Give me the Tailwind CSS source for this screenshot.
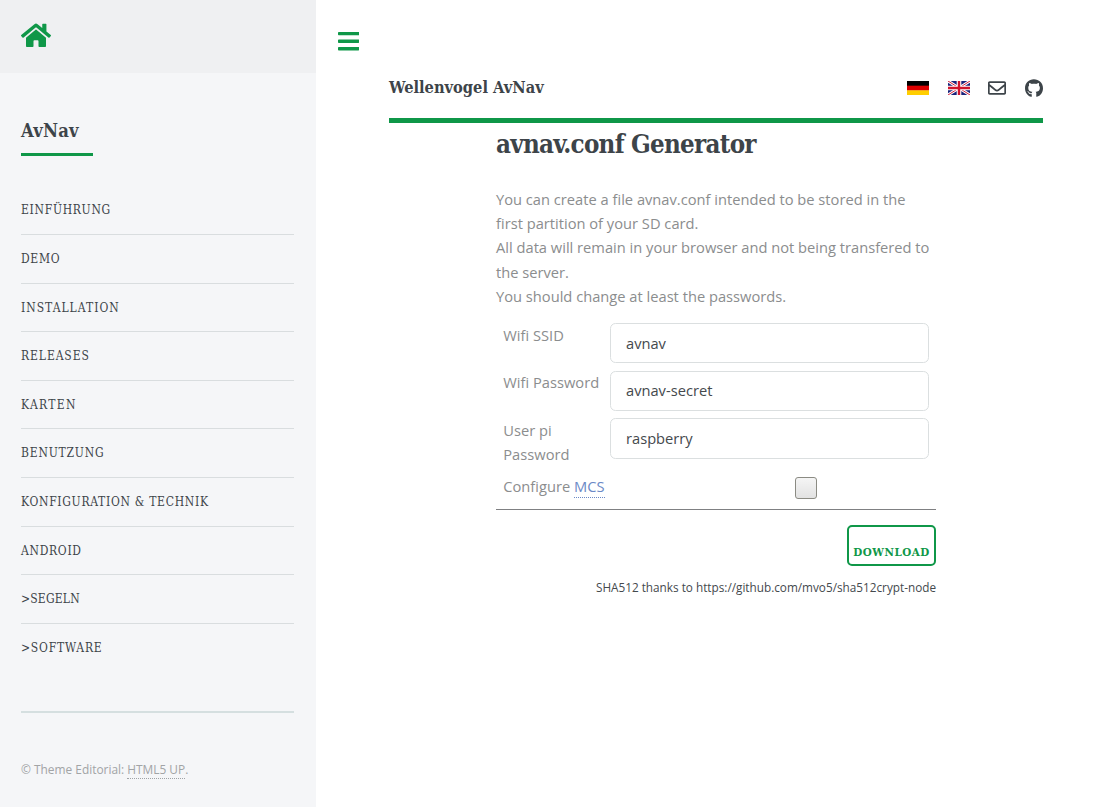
<!DOCTYPE html>
<html lang="de">
<head>
<meta charset="utf-8">
<title>avnav.conf Generator</title>
<script src="https://cdn.jsdelivr.net/npm/@tailwindcss/browser@4"></script>
</head>
<body class="flex h-[807px] overflow-hidden bg-white font-['Open_Sans','Noto_Sans',sans-serif] text-[14.68px] leading-[24.2px] text-[#7f888f]">
<aside class="flex h-full w-[316px] shrink-0 flex-col bg-[#f5f6f8]">
  <div class="h-[73px] shrink-0 bg-[#eff0f2] pl-[21px] pt-[22px]">
    <svg class="h-[26.7px] w-[30px] fill-[#0f9748]" viewBox="0 0 576 512"><path d="M280.37 148.26L96 300.11V464a16 16 0 0 0 16 16l112.06-.29a16 16 0 0 0 15.92-16V368a16 16 0 0 1 16-16h64a16 16 0 0 1 16 16v95.64a16 16 0 0 0 16 16.05L464 480a16 16 0 0 0 16-16V300L295.67 148.26a12.19 12.19 0 0 0-15.3 0zM571.6 251.47L488 182.56V44.05a12 12 0 0 0-12-12h-56a12 12 0 0 0-12 12v72.61L318.47 43a48 48 0 0 0-61 0L4.34 251.47a12 12 0 0 0-1.6 16.9l25.5 31A12 12 0 0 0 45.15 301l235.22-193.74a12.19 12.19 0 0 1 15.3 0L530.9 301a12 12 0 0 0 16.9-1.6l25.5-31a12 12 0 0 0-1.7-16.93z"/></svg>
  </div>
  <div class="ml-[21px] w-[273px]">
    <h2 class="mt-[44px] h-[39px] w-[72px] border-b-3 border-[#0f9748] font-['Roboto_Slab','DejaVu_Serif_Condensed','DejaVu_Serif',serif] text-[18.3px] leading-[27px] font-bold font-stretch-condensed tracking-[0.2px] whitespace-nowrap text-[#3d4449]">AvNav</h2>
    <nav class="mt-[30.4px] flex flex-col divide-y divide-[#d9dddf] font-['Roboto_Slab','DejaVu_Serif_Condensed','DejaVu_Serif',serif] text-[12px] leading-[49.2px] font-stretch-condensed tracking-[0.7px] whitespace-nowrap text-[#3d4449]">
      <a class="h-[48.6px]">EINFÜHRUNG</a>
      <a class="h-[48.6px]">DEMO</a>
      <a class="h-[48.6px] tracking-[1px]">INSTALLATION</a>
      <a class="h-[48.6px] tracking-[0.9px]">RELEASES</a>
      <a class="h-[48.6px] tracking-[1.3px]">KARTEN</a>
      <a class="h-[48.6px] tracking-[0.8px]">BENUTZUNG</a>
      <a class="h-[48.6px]">KONFIGURATION &amp; TECHNIK</a>
      <a class="h-[48.6px]">ANDROID</a>
      <a class="h-[48.6px] tracking-[0.2px]">&gt;SEGELN</a>
      <a class="h-[48.6px] tracking-[0.8px]">&gt;SOFTWARE</a>
    </nav>
    <footer class="mt-[38.6px] border-t-2 border-[#d5dfe0] pt-[44.4px] text-[11.9px] text-[#a2a4a6]">© Theme Editorial: <a class="border-b border-dotted border-[#9fa3a6] pb-px">HTML5 UP</a>.</footer>
  </div>
</aside>
<main class="w-[727px] pl-[22px] pt-[28.6px]">
  <svg class="h-[24.4px] w-[21.3px] fill-[#0f9748]" viewBox="0 0 448 512"><path d="M16 132h416c8.837 0 16-7.163 16-16V76c0-8.837-7.163-16-16-16H16C7.163 60 0 67.163 0 76v40c0 8.837 7.163 16 16 16zm0 160h416c8.837 0 16-7.163 16-16v-40c0-8.837-7.163-16-16-16H16c-8.837 0-16 7.163-16 16v40c0 8.837 7.163 16 16 16zm0 160h416c8.837 0 16-7.163 16-16v-40c0-8.837-7.163-16-16-16H16c-8.837 0-16 7.163-16 16v40c0 8.837 7.163 16 16 16z"/></svg>
  <div class="ml-[51px]">
    <header class="mt-[22px] flex h-[48px] items-start justify-between border-b-5 border-[#0f9748]">
      <strong class="font-['Roboto_Slab','DejaVu_Serif_Condensed','DejaVu_Serif',serif] text-[16.3px] leading-[26px] font-stretch-condensed whitespace-nowrap text-[#3d4449]">Wellenvogel AvNav</strong>
      <div class="flex h-[26px] items-center">
        <svg class="mr-[19px] h-[14px] w-[22px]" viewBox="0 0 22 14"><path d="M0 0h22v5H0z"/><path fill="#d00" d="M0 4.67h22v5H0z"/><path fill="#ffce00" d="M0 9.33h22V14H0z"/></svg>
        <svg class="mr-[18px] h-[14px] w-[22px]" viewBox="0 0 22 14"><path fill="#1a237b" d="M0 0h22v14H0z"/><path d="M0 0l22 14M22 0L0 14" stroke="#fff" stroke-width="2.8"/><path d="M0 0l22 14M22 0L0 14" stroke="#d0203a" stroke-width="1"/><path d="M11 0v14M0 7h22" stroke="#fff" stroke-width="4.6"/><path d="M11 0v14M0 7h22" stroke="#d0142c" stroke-width="2.4"/></svg>
        <svg class="mr-[19px] h-[18px] w-[18px] fill-[#3d4449]" viewBox="0 0 512 512"><path d="M464 64H48C21.49 64 0 85.49 0 112v288c0 26.51 21.49 48 48 48h416c26.51 0 48-21.49 48-48V112c0-26.51-21.49-48-48-48zm0 48v40.805c-22.422 18.259-58.168 46.651-134.587 106.49-16.841 13.247-50.201 45.072-73.413 44.701-23.208.375-56.579-31.459-73.413-44.701C106.18 199.465 70.425 171.067 48 152.805V112h416zM48 400V214.398c22.914 18.251 55.409 43.862 104.938 82.646 21.857 17.205 60.134 55.186 103.062 54.955 42.717.231 80.509-37.199 103.053-54.947 49.528-38.783 82.032-64.401 104.947-82.653V400H48z"/></svg>
        <svg class="h-[18.6px] w-[18px] fill-[#3d4449]" viewBox="0 0 496 512"><path d="M244.8 8C106.1 8 0 113.3 0 252c0 110.9 69.8 205.8 169.5 239.2 12.8 2.3 17.3-5.6 17.3-12.1 0-6.2-.3-40.4-.3-61.4 0 0-70 15-84.7-29.8 0 0-11.4-29.1-27.8-36.6 0 0-22.9-15.7 1.6-15.4 0 0 24.9 2 38.6 25.8 21.9 38.6 58.6 27.5 72.9 20.9 2.3-16 8.8-27.1 16-33.7-55.9-6.2-112.3-14.3-112.3-110.5 0-27.5 7.6-41.3 23.6-58.9-2.6-6.5-11.1-33.3 2.6-67.9 20.9-6.5 69 27 69 27 20-5.6 41.5-8.5 62.8-8.5s42.8 2.9 62.8 8.5c0 0 48.1-33.6 69-27 13.7 34.7 5.2 61.4 2.6 67.9 16 17.7 25.8 31.5 25.8 58.9 0 96.5-58.9 104.2-114.8 110.5 9.2 7.9 17 22.9 17 46.4 0 33.7-.3 75.4-.3 83.6 0 6.5 4.6 14.4 17.3 12.1C428.2 457.8 496 362.9 496 252 496 113.3 383.5 8 244.8 8z"/></svg>
      </div>
    </header>
    <section class="ml-[107px] w-[440px]">
      <h1 class="h-[64px] pt-[3px] font-['Roboto_Slab','DejaVu_Serif_Condensed','DejaVu_Serif',serif] text-[25.7px] leading-[36px] font-bold font-stretch-condensed tracking-[-0.75px] whitespace-nowrap text-[#3d4449]">avnav.conf Generator</h1>
      <p class="whitespace-nowrap text-[#8b8d8e]">You can create a file avnav.conf intended to be stored in the<br>first partition of your SD card.<br>All data will remain in your browser and not being transfered to<br>the server.<br>You should change at least the passwords.</p>
      <div class="mt-[15px] grid grid-cols-[106.7px_319px] grid-rows-[47.6px_47.6px_56px_34.6px] pl-[7.3px] text-[#8b8d8e]">
        <span>Wifi SSID</span><span class="h-[40.3px] rounded-[5.5px] border border-[#dbdfe0] pl-[15px] leading-[38.6px] text-[#44494d]">avnav</span>
        <span class="-mt-px">Wifi Password</span><span class="h-[40.3px] rounded-[5.5px] border border-[#dbdfe0] pl-[15px] leading-[37px] text-[#44494d]">avnav-secret</span>
        <span>User pi<br>Password</span><span class="h-[41px] rounded-[5.5px] border border-[#dbdfe0] pl-[15px] leading-[39px] text-[#44494d]">raspberry</span>
        <span class="whitespace-nowrap">Configure <a class="border-b border-dotted border-[#6b89c6] pb-px text-[#6b89c6]">MCS</a></span><span class="mt-[3px] ml-[185px] size-[22px] rounded-[3px] border border-[#8b8b83] bg-linear-to-b from-[#f5f5f5] to-[#e2e2e2]"></span>
      </div>
      <div class="flex flex-col items-end border-t border-[#7f8082] pt-[15px]">
        <button class="h-[41px] w-[89px] rounded-[5px] border-2 border-[#0f9748] pt-[13px] font-['Roboto_Slab','DejaVu_Serif_Condensed','DejaVu_Serif',serif] text-[11.5px] leading-[24px] font-bold font-stretch-condensed tracking-[0.5px] whitespace-nowrap text-[#0f9748]">DOWNLOAD</button>
        <p class="mt-[9px] text-[11.76px] whitespace-nowrap text-[#44494d]">SHA512 thanks to https://github.com/mvo5/sha512crypt-node</p>
      </div>
    </section>
  </div>
</main>
</body>
</html>
